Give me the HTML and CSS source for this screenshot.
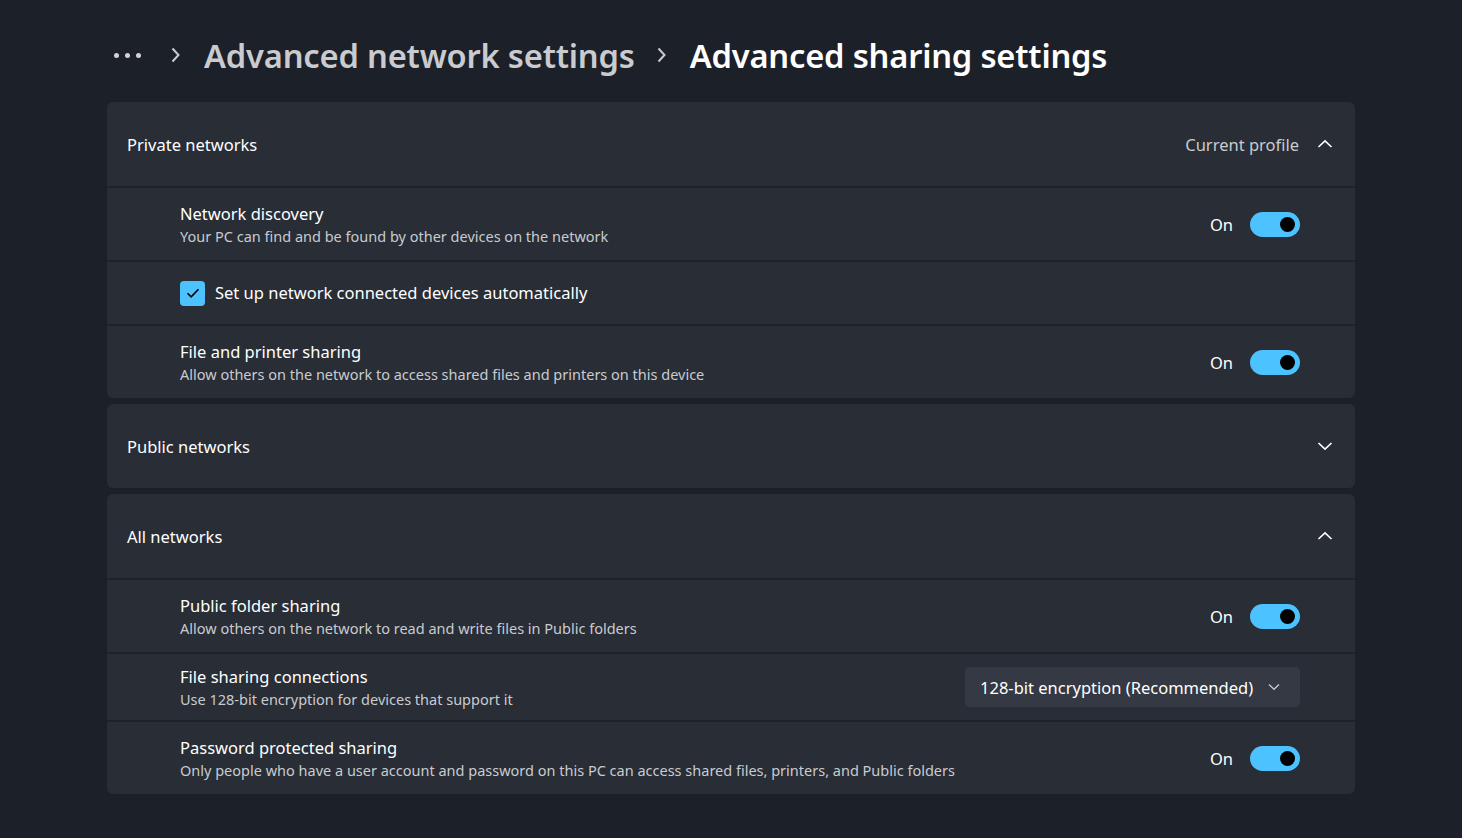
FILE: index.html
```html
<!DOCTYPE html>
<html lang="en">
<head>
<meta charset="utf-8">
<title>Advanced sharing settings</title>
<link rel="stylesheet" href="styles.css">
</head>
<body>
<main class="page">
  <nav class="crumbs">
    <span class="dots"><i></i><i></i><i></i></span>
    <svg class="crumb-chev" width="13" height="20" viewBox="0 0 13 20"><path d="M3.5 3.5 L9.5 10 L3.5 16.5" fill="none" stroke="#c9cbcf" stroke-width="2"/></svg>
    <span class="crumb">Advanced network settings</span>
    <svg class="crumb-chev" width="13" height="20" viewBox="0 0 13 20"><path d="M3.5 3.5 L9.5 10 L3.5 16.5" fill="none" stroke="#c9cbcf" stroke-width="2"/></svg>
    <span class="crumb current">Advanced sharing settings</span>
  </nav>

  <section class="card">
    <div class="card-head">
      <span class="head-title">Private networks</span>
      <span class="head-right">
        <span class="head-note">Current profile</span>
        <svg class="chev" width="16" height="10" viewBox="0 0 16 10"><path d="M1.5 8 L8 1.8 L14.5 8" fill="none" stroke="#ffffff" stroke-width="1.6"/></svg>
      </span>
    </div>
    <div class="row">
      <div class="row-text">
        <div class="row-title">Network discovery</div>
        <div class="row-sub">Your PC can find and be found by other devices on the network</div>
      </div>
      <div class="toggle-wrap"><span class="on">On</span><span class="toggle"><span class="knob"></span></span></div>
    </div>
    <div class="row row-check">
      <span class="checkbox"><svg width="14" height="12" viewBox="0 0 14 12"><path d="M1.5 6.2 L5.2 9.8 L12.5 2.2" fill="none" stroke="#000" stroke-width="1.6"/></svg></span>
      <span class="row-title">Set up network connected devices automatically</span>
    </div>
    <div class="row">
      <div class="row-text">
        <div class="row-title">File and printer sharing</div>
        <div class="row-sub">Allow others on the network to access shared files and printers on this device</div>
      </div>
      <div class="toggle-wrap"><span class="on">On</span><span class="toggle"><span class="knob"></span></span></div>
    </div>
  </section>

  <section class="card">
    <div class="card-head">
      <span class="head-title">Public networks</span>
      <span class="head-right">
        <svg class="chev" width="16" height="10" viewBox="0 0 16 10"><path d="M1.5 2 L8 8.2 L14.5 2" fill="none" stroke="#ffffff" stroke-width="1.6"/></svg>
      </span>
    </div>
  </section>

  <section class="card">
    <div class="card-head">
      <span class="head-title">All networks</span>
      <span class="head-right">
        <svg class="chev" width="16" height="10" viewBox="0 0 16 10"><path d="M1.5 8 L8 1.8 L14.5 8" fill="none" stroke="#ffffff" stroke-width="1.6"/></svg>
      </span>
    </div>
    <div class="row">
      <div class="row-text">
        <div class="row-title">Public folder sharing</div>
        <div class="row-sub">Allow others on the network to read and write files in Public folders</div>
      </div>
      <div class="toggle-wrap"><span class="on">On</span><span class="toggle"><span class="knob"></span></span></div>
    </div>
    <div class="row row-mid">
      <div class="row-text">
        <div class="row-title">File sharing connections</div>
        <div class="row-sub">Use 128-bit encryption for devices that support it</div>
      </div>
      <div class="select">
        <span>128-bit encryption (Recommended)</span>
        <svg width="12" height="8" viewBox="0 0 12 8"><path d="M1 1.5 L6 6.3 L11 1.5" fill="none" stroke="#c9cbcf" stroke-width="1.3"/></svg>
      </div>
    </div>
    <div class="row">
      <div class="row-text">
        <div class="row-title">Password protected sharing</div>
        <div class="row-sub">Only people who have a user account and password on this PC can access shared files, printers, and Public folders</div>
      </div>
      <div class="toggle-wrap"><span class="on">On</span><span class="toggle"><span class="knob"></span></span></div>
    </div>
  </section>
</main>
</body>
</html>
```

FILE: styles.css
```css
* { box-sizing: border-box; }

html, body {
  margin: 0;
  height: 100%;
}

body {
  background: #1c2029;
  color: #ffffff;
  font-family: "Noto Sans", "Open Sans", sans-serif;
  font-size: 16.5px;
}

.page {
  padding: 0 107px;
  display: flex;
  flex-direction: column;
  gap: 6px;
}

.crumbs {
  height: 96px;
  display: flex;
  align-items: center;
  padding: 14px 0 0 7px;
}

.dots {
  display: flex;
  gap: 6px;
  margin-right: 28px;
}

.dots i {
  width: 5px;
  height: 5px;
  border-radius: 50%;
  background: #d0d2d5;
}

.crumb-chev {
  margin-right: 22px;
}

.crumb {
  font-size: 32.7px;
  font-weight: 600;
  color: #c9cbcf;
  margin-right: 20px;
  letter-spacing: -0.2px;
}

.crumb.current {
  color: #ffffff;
}

.card {
  background: #282d36;
  border-radius: 6px;
  overflow: hidden;
}

.card-head {
  height: 84px;
  display: flex;
  align-items: center;
  justify-content: space-between;
  padding: 0 22px 0 20px;
}

.head-title {
  font-size: 16.5px;
}

.head-right {
  display: flex;
  align-items: center;
  gap: 18px;
}

.head-note {
  color: #c9cbcf;
  font-size: 16.5px;
}

.chev {
  display: block;
}

.row {
  border-top: 2px solid #1d2129;
  min-height: 74px;
  display: flex;
  align-items: center;
  justify-content: space-between;
  padding: 0 55px 0 73px;
}

.row-check {
  min-height: 64px;
  justify-content: flex-start;
  gap: 10px;
}

.row-mid {
  min-height: 68px;
}

.row-text {
  display: flex;
  flex-direction: column;
  gap: 1px;
}

.row-title {
  font-size: 16.5px;
  line-height: 22px;
}

.row-sub {
  font-size: 14.5px;
  line-height: 20px;
  color: #c9cbcf;
}

.toggle-wrap {
  display: flex;
  align-items: center;
  gap: 17px;
}

.on {
  font-size: 16.5px;
}

.toggle {
  width: 50px;
  height: 25px;
  border-radius: 13px;
  background: #4cc2ff;
  display: flex;
  align-items: center;
  justify-content: flex-end;
  padding-right: 5px;
}

.knob {
  width: 15px;
  height: 15px;
  border-radius: 50%;
  background: #000000;
}

.checkbox {
  width: 25px;
  height: 25px;
  border-radius: 4px;
  background: #4cc2ff;
  display: flex;
  align-items: center;
  justify-content: center;
}

.select {
  width: 335px;
  height: 40px;
  background: #343943;
  border-radius: 5px;
  display: flex;
  align-items: center;
  justify-content: space-between;
  padding: 0 20px 0 15px;
  font-size: 16.5px;
}
```
